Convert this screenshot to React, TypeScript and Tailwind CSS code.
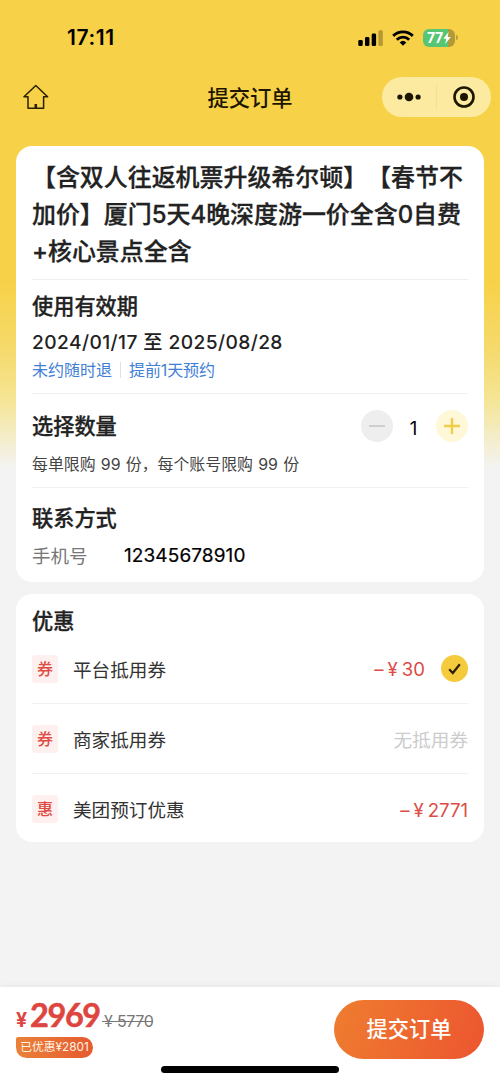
import type { ReactNode } from "react";

const StatusBar = () => (
  <div className="flex h-[74px] items-center justify-between pl-[67px] pr-[42px] pt-px">
    <span className="text-[21px] font-semibold leading-6 tracking-[0.6px]">17:11</span>
    <div className="flex items-center">
      <svg width="25" height="16" viewBox="0 0 25 16">
        <rect x="0.3" y="10" width="4.4" height="6" rx="1.3" />
        <rect x="7" y="7" width="4.4" height="9" rx="1.3" />
        <rect x="13.7" y="3.6" width="4.4" height="12.4" rx="1.3" />
        <rect x="20.4" y="0.3" width="4.4" height="15.7" rx="1.3" opacity="0.27" />
      </svg>
      <svg className="ml-[9px]" width="22" height="16" viewBox="0 0 22 16" fill="none" stroke="#000" strokeWidth="2.9">
        <path d="M1.2 5.9a14 14 0 0 1 19.6 0" />
        <path d="M4.8 9.7a8.8 8.8 0 0 1 12.4 0" />
        <path d="M11 15.7 7.7 12.4a4.8 4.8 0 0 1 6.6 0z" fill="#000" stroke="none" />
      </svg>
      <div className="ml-[9px] flex h-[18px] w-[32px] items-center justify-center rounded-[6px] bg-[linear-gradient(90deg,#57c674_78%,#b09a3a_78%)] text-white">
        <span className="text-[14px] font-bold leading-none tracking-[-0.2px]">77</span>
        <svg width="8" height="12" viewBox="0 0 8 12" fill="#fff">
          <path d="M5.6 0 0.3 6.8h3L2.2 12 7.8 4.9H4.6z" />
        </svg>
      </div>
      <span className="ml-[1px] h-[5px] w-[2px] rounded-r-full bg-[#b9a03c]" />
    </div>
  </div>
);

const NavBar = () => (
  <div className="grid h-[46px] grid-cols-[109px_1fr_109px] items-center pl-[9px] pr-[9px]">
    <svg className="ml-[14px]" width="26" height="26" viewBox="0 0 26 26" fill="none" stroke="#2b2000" strokeWidth="1.5" strokeLinejoin="round">
      <path d="M12.8 1.5 1 12.8h4v11.4h15.6V12.8h4z" />
      <path d="M12.8 20v4" strokeWidth="2.6" />
    </svg>
    <h1 className="pt-px text-center text-[21.3px] font-medium leading-7 text-[#1c1500]">提交订单</h1>
    <div className="flex h-10 w-[109px] items-center rounded-full bg-[#fbeaa0]">
      <div className="flex flex-1 justify-center">
        <svg width="24" height="10" viewBox="0 0 24 10" fill="#1c1500">
          <circle cx="2.9" cy="5" r="2.6" />
          <circle cx="12" cy="5" r="4.3" />
          <circle cx="21.1" cy="5" r="2.6" />
        </svg>
      </div>
      <span className="h-[26px] w-px bg-[#f3e093]" />
      <div className="flex flex-1 justify-center">
        <svg width="22" height="22" viewBox="0 0 22 22" fill="#1c1500">
          <circle cx="11" cy="11" r="9.5" fill="none" stroke="#1c1500" strokeWidth="2.6" />
          <circle cx="11" cy="11" r="4" />
        </svg>
      </div>
    </div>
  </div>
);

const Heading = ({ children }: { children: ReactNode }) => (
  <h2 className="text-[21.2px] font-medium leading-7 text-[#222] [-webkit-text-stroke:0.3px_#222]">{children}</h2>
);

const Coupon = ({ tag, name, children }: { tag: string; name: string; children: ReactNode }) => (
  <div className="flex h-[70px] items-center border-b border-[#f1f1f1] last:border-b-0">
    <span className="flex h-7 w-[26px] items-center justify-center rounded-[3px] bg-[#fdf0ee] text-[16px] font-medium leading-none text-[#e04b43]">
      {tag}
    </span>
    <span className="ml-[15px] pt-[2px] text-[18.6px] leading-6 text-[#333]">{name}</span>
    <div className="ml-auto flex items-center text-[18.6px] leading-6">{children}</div>
  </div>
);

const Amount = ({ value }: { value: string }) => (
  <span className="flex items-center pt-px text-[#dc4b46]">
    <span>–</span>
    <span className="ml-[4px] mr-[4px]">¥</span>
    <span>{value}</span>
  </span>
);

const App = () => {
  return (
    <div className="flex h-[1083px] w-[500px] flex-col overflow-hidden bg-[#f3f3f3] bg-[linear-gradient(180deg,#f7d147_0px,#f7d147_280px,#f5da6c_350px,#f5e595_400px,#f3f3f3_468px)] font-['Inter','Noto_Sans_CJK_SC',sans-serif] text-black [text-spacing-trim:space-all]">
      <StatusBar />
      <NavBar />

      <main className="flex flex-1 flex-col gap-3 px-4 pt-[26px]">
        <section className="h-[436px] rounded-[16px] bg-white px-4">
          <div className="h-[134px] border-b border-[#efefef] pt-[13px]">
            <p className="whitespace-nowrap text-[23.95px] font-medium leading-[37px] text-[#222] [-webkit-text-stroke:0.3px_#222]">
              【含双人往返机票升级希尔顿】【春节不
              <br />
              加价】厦门5天4晚深度游一价全含0自费
              <br />
              +核心景点全含
            </p>
          </div>

          <div className="h-[114px] border-b border-[#f1f1f1] pt-[12px]">
            <Heading>使用有效期</Heading>
            <p className="mt-[8px] text-[19.2px] font-medium leading-7 tracking-[0.4px] text-[#222]">2024/01/17 至 2025/08/28</p>
            <div className="mt-[2px] flex items-center text-[16px] leading-6 text-[#3f7fd6]">
              <span>未约随时退</span>
              <span className="mx-2 h-4 w-px bg-[#dbe3ee]" />
              <span className="tracking-[-0.1px]">提前1天预约</span>
            </div>
          </div>

          <div className="h-[94px] border-b border-[#f1f1f1] pt-4">
            <div className="flex h-8 items-center justify-between">
              <Heading>选择数量</Heading>
              <div className="flex items-center">
                <button className="flex h-8 w-8 items-center justify-center rounded-full bg-[#eee]">
                  <span className="h-[2px] w-4 bg-[#cfcfcf]" />
                </button>
                <span className="w-[41px] pt-1 text-center text-[18.6px] leading-7">1</span>
                <button className="ml-[2px] flex h-8 w-8 items-center justify-center rounded-full bg-[#fef8d8]">
                  <svg width="16" height="16" viewBox="0 0 16 16" stroke="#f3cc45" strokeWidth="2.4">
                    <path d="M8 0v16M0 8h16" />
                  </svg>
                </button>
              </div>
            </div>
            <p className="mt-[11px] text-[15.9px] leading-6 text-[#444] [word-spacing:0.8px]">每单限购 99 份，每个账号限购 99 份</p>
          </div>

          <div className="pt-4">
            <Heading>联系方式</Heading>
            <div className="mt-[10px] flex text-[18.5px] leading-7">
              <span className="w-[92px] text-[#777]">手机号</span>
              <span className="text-[19px] tracking-[0.1px] text-black [-webkit-text-stroke:0.2px_#000]">12345678910</span>
            </div>
          </div>
        </section>

        <section className="h-[248px] rounded-[16px] bg-white px-4 pt-[13px]">
          <Heading>优惠</Heading>
          <div className="-mt-px">
            <Coupon tag="券" name="平台抵用券">
              <Amount value="30" />
              <span className="ml-4 flex size-[27px] items-center justify-center rounded-full bg-[#f5ca3c]">
                <svg width="13" height="12" viewBox="0 0 13 12" fill="none" stroke="#2b2000" strokeWidth="2.2">
                  <path d="M1.2 6.2 4.8 10 11.8 1.2" />
                </svg>
              </span>
            </Coupon>
            <Coupon tag="券" name="商家抵用券">
              <span className="pt-[2px] text-[#ccc]">无抵用券</span>
            </Coupon>
            <Coupon tag="惠" name="美团预订优惠">
              <Amount value="2771" />
            </Coupon>
          </div>
        </section>
      </main>

      <footer className="flex h-24 flex-col bg-white shadow-[0_-1px_6px_rgba(0,0,0,0.05)]">
        <div className="flex h-[79px] items-start justify-between pl-4 pr-4 pt-[13px]">
          <div>
            <div className="-mt-px flex h-8 items-baseline leading-8">
              <span className="w-[14px] text-[19.5px] font-bold text-[#de4540]">¥</span>
              <span className="w-[72px] font-['Lato','Inter',sans-serif] text-[32.5px] font-bold tracking-[-1.4px] text-[#de4540] [-webkit-text-stroke:0.5px_#de4540]">2969</span>
              <span className="relative flex text-[16px] text-[#777]">
                <span className="w-[15px] pl-[2px]">¥</span>
                <span className="tracking-[-0.4px]">5770</span>
                <span className="absolute inset-x-0 top-[16px] h-px bg-[#777]" />
              </span>
            </div>
            <div className="mt-[6px] flex h-[21px] w-[77px] items-center justify-center whitespace-nowrap rounded-[10.5px] rounded-tl-[2px] bg-[linear-gradient(90deg,#ea8138,#e65a30)] text-[11.8px] text-[#fff3e6]">
              已优惠¥2801
            </div>
          </div>
          <button className="h-[59px] w-[150px] rounded-full bg-[linear-gradient(110deg,#ef7d2f,#ec5530)] text-[21.2px] font-medium text-white">
            提交订单
          </button>
        </div>
        <div className="mx-auto h-[7px] w-[178px] rounded-full bg-black" />
      </footer>
    </div>
  );
};

export default App;
